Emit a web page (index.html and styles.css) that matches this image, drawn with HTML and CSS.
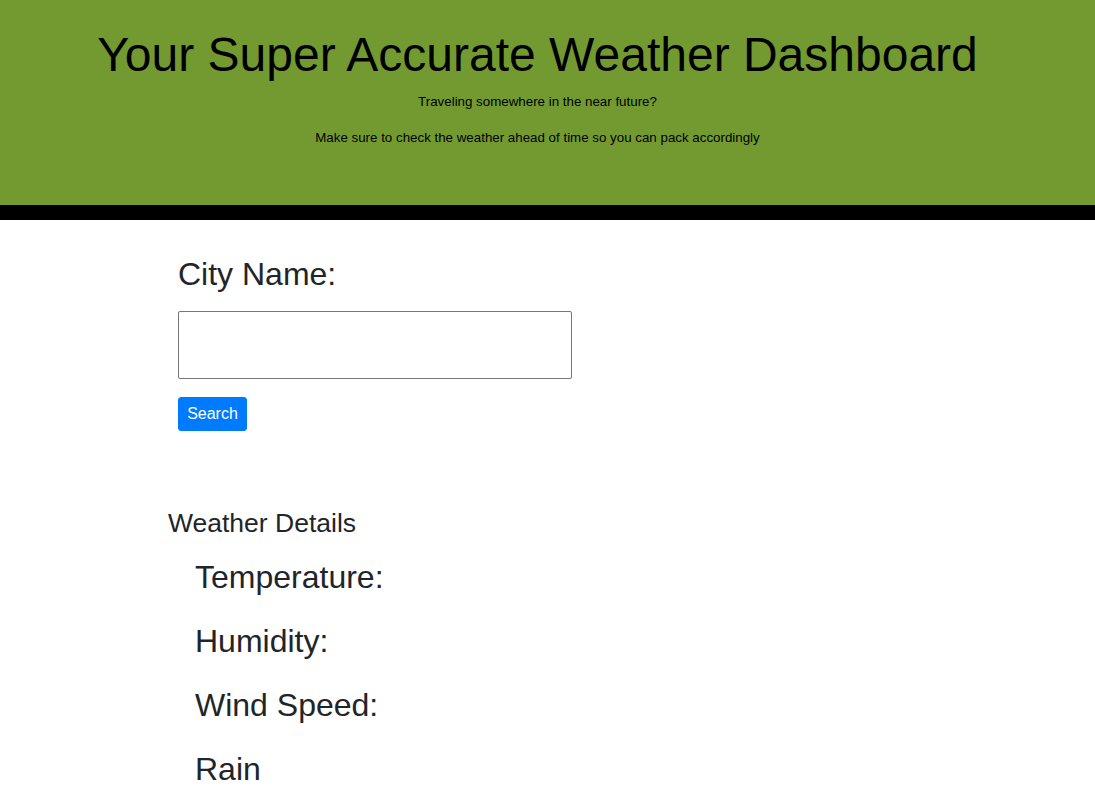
FILE: index.html
```html
<!DOCTYPE html>
<html lang="en">
<head>
<meta charset="utf-8">
<title>Weather Dashboard</title>
<link rel="stylesheet" href="styles.css">
</head>
<body>
<header class="hero">
  <h1 class="hero-title">Your Super Accurate Weather Dashboard</h1>
  <p class="hero-sub first">Traveling somewhere in the near future?</p>
  <p class="hero-sub">Make sure to check the weather ahead of time so you can pack accordingly</p>
</header>
<main class="content">
  <form class="search-form">
    <label class="city-label" for="city">City Name:</label>
    <input class="city-input" id="city" type="text">
    <button class="search-btn" type="button">Search</button>
  </form>
  <section class="details">
    <h4 class="details-title">Weather Details</h4>
    <div class="details-list">
      <p class="detail-row">Temperature:</p>
      <p class="detail-row">Humidity:</p>
      <p class="detail-row">Wind Speed:</p>
      <p class="detail-row">Rain</p>
    </div>
  </section>
</main>
</body>
</html>
```
FILE: styles.css
```css
html, body {
  margin: 0;
  padding: 0;
}
body {
  font-family: "Liberation Sans", Arial, sans-serif;
  color: #212529;
  background: #fff;
  font-size: 16px;
  line-height: 1.5;
}
.hero {
  box-sizing: border-box;
  height: 220px;
  background: #739a30;
  border-bottom: 15px solid #000;
  text-align: center;
  padding: 26px 20px 0 0;
  color: #000;
}
.hero-title {
  margin: 0;
  font-size: 48px;
  font-weight: 400;
  line-height: 1.2;
}
.hero-sub {
  margin: 16px 0 0;
  font-size: 13.333px;
  line-height: 1.5;
}
.hero-sub.first {
  margin-top: 8px;
}
.content {
  padding-left: 168px;
}
.search-form {
  display: flex;
  flex-direction: column;
  align-items: flex-start;
  padding: 35px 0 0 10px;
  margin: 0;
}
.city-label {
  font-size: 32px;
  line-height: 1.2;
  margin-bottom: 18px;
}
.city-input {
  box-sizing: border-box;
  width: 394px;
  height: 68px;
  border: 1px solid #767676;
  border-radius: 2px;
  margin: 0 0 18px;
  padding: 0 8px;
  font-size: 16px;
}
.search-btn {
  box-sizing: border-box;
  height: 34px;
  width: 69px;
  padding: 0;
  border: 1px solid #007bff;
  border-radius: 3px;
  background: #007bff;
  color: #fff;
  font-family: "Liberation Sans", Arial, sans-serif;
  font-size: 16px;
  line-height: 1;
}
.details {
  margin-top: 77px;
}
.details-title {
  margin: 0;
  font-size: 26.5px;
  font-weight: 400;
  line-height: 1.2;
}
.details-list {
  padding: 13px 0 0 27px;
}
.detail-row {
  margin: 0 0 16px;
  font-size: 32px;
  line-height: 1.5;
}
```
